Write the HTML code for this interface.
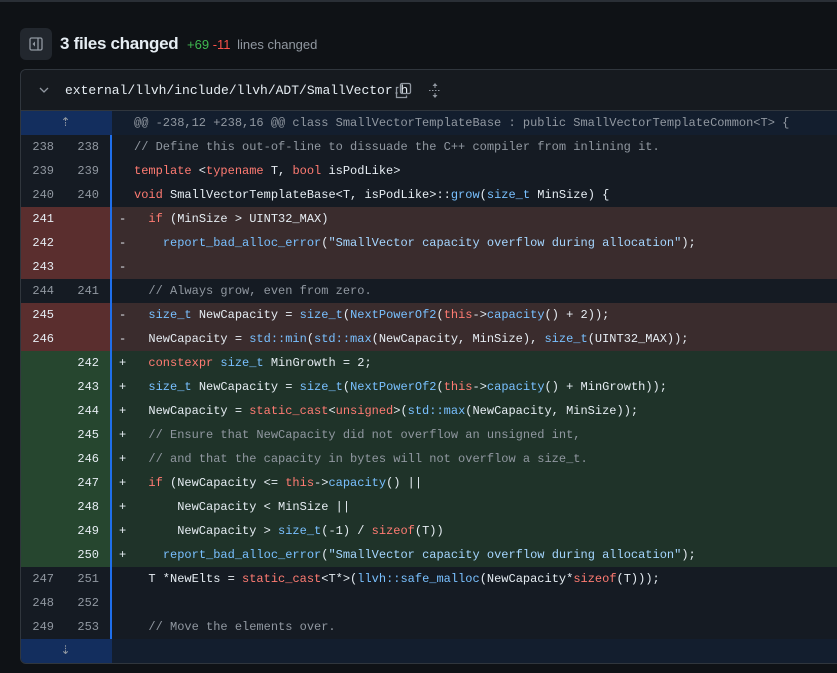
<!DOCTYPE html>
<html><head><style>
body{margin:0;background:#0f1216;width:837px;height:673px;overflow:hidden;font-family:"Liberation Sans",sans-serif;color:#e6edf3;position:relative}
.topline{position:absolute;top:0;left:0;right:0;height:2px;background:#2a2f36}
.tog{position:absolute;left:20px;top:28px;width:32px;height:32px;background:#22272e;border-radius:6px}
.title{position:absolute;left:60px;top:34px;font-size:17px;font-weight:bold;letter-spacing:-0.3px}
.stats{position:absolute;left:187px;top:37px;font-size:13px}
.box{position:absolute;left:20px;top:69px;width:830px;height:593px;border:1px solid #30363d;border-radius:6px;overflow:hidden;background:#151b23}
.hdr{height:40px;background:#161a1f;border-bottom:1px solid #30363d;position:relative}
.path{position:absolute;left:44px;top:13px;font-family:"Liberation Mono",monospace;font-size:13px;color:#e6edf3}
.row{height:24px;display:flex;font-family:"Liberation Mono",monospace;font-size:12px;line-height:24px;white-space:pre}
.n1,.n2{width:44px;text-align:right;padding-right:0;color:#9198a1;box-sizing:border-box}
.n1{width:44px;padding-right:11px;padding-left:0}
.n1{width:44px}
.n2{width:45px;padding-right:11px}
.bar{width:2px;background:#1f6feb}
.m{width:22px;padding-left:7px;box-sizing:border-box}
.c{flex:1}
.d .n1,.d .n2{background:#5a2e2e;color:#e6edf3}
.d .c,.d .m{background:#3a2c2d}
.a .n1,.a .n2{background:#26462f;color:#e6edf3}
.a .c,.a .m{background:#1f3329}
.h .n1,.h .n2{background:#132e5e}
.h .c,.h .m{background:#131e2e;color:#9198a1}
.k{color:#ff7b72}.f{color:#79c0ff}.s{color:#a5d6ff}.cm{color:#9198a1}
</style></head><body>
<div class="topline"></div>
<div class="tog"><svg width="32" height="32" viewBox="0 0 32 32"><rect x="10" y="10" width="12" height="12" rx="1.5" fill="none" stroke="#9198a1" stroke-width="1.3"/><line x1="18" y1="10" x2="18" y2="22" stroke="#9198a1" stroke-width="1.3"/><path d="M15 13.5 L12.5 16 L15 18.5Z" fill="#9198a1"/></svg></div>
<div class="title">3 files changed</div>
<div class="stats"><span style="color:#3fb950">+69</span> <span style="color:#f85149">-11</span> <span style="color:#9198a1;margin-left:3px">lines changed</span></div>
<div class="box">
<div class="hdr">
<svg style="position:absolute;left:17px;top:14px" width="12" height="12" viewBox="0 0 12 12"><path d="M2 4 L6 8 L10 4" fill="none" stroke="#9198a1" stroke-width="1.3"/></svg>
<div class="path">external/llvh/include/llvh/ADT/SmallVector.h</div>
<svg style="position:absolute;left:374px;top:12px" width="17" height="17" viewBox="0 0 17 17"><rect x="5.5" y="1.5" width="10" height="10" rx="1.5" fill="none" stroke="#9198a1" stroke-width="1.3"/><path d="M3.5 5.5 H1.5 V15.5 H11.5 V13.5" fill="none" stroke="#9198a1" stroke-width="1.3"/></svg>
<svg style="position:absolute;left:407px;top:12px" width="14" height="17" viewBox="0 0 14 17"><path d="M7 1 L4.5 4 H9.5Z M7 16 L4.5 13 H9.5Z" fill="#9198a1"/><line x1="7" y1="3" x2="7" y2="6" stroke="#9198a1"/><line x1="7" y1="11" x2="7" y2="14" stroke="#9198a1"/><line x1="1" y1="8.5" x2="13" y2="8.5" stroke="#9198a1" stroke-dasharray="1.5 1.5"/></svg>
</div>
<div class="row h"><span class="n1" style="width:89px;text-align:center;padding:0;color:#9198a1">⇡</span><span class="bar" style="background:#132e5e"></span><span class="m"></span><span class="c">@@ -238,12 +238,16 @@ class SmallVectorTemplateBase : public SmallVectorTemplateCommon&lt;T&gt; {</span></div>
<div class="row"><span class="n1">238</span><span class="n2">238</span><span class="bar"></span><span class="m"></span><span class="c"><span class="cm">// Define this out-of-line to dissuade the C++ compiler from inlining it.</span></span></div>
<div class="row"><span class="n1">239</span><span class="n2">239</span><span class="bar"></span><span class="m"></span><span class="c"><span class="k">template</span> &lt;<span class="k">typename</span> T, <span class="k">bool</span> isPodLike&gt;</span></div>
<div class="row"><span class="n1">240</span><span class="n2">240</span><span class="bar"></span><span class="m"></span><span class="c"><span class="k">void</span> SmallVectorTemplateBase&lt;T, isPodLike&gt;::<span class="f">grow</span>(<span class="f">size_t</span> MinSize) {</span></div>
<div class="row d"><span class="n1">241</span><span class="n2"></span><span class="bar"></span><span class="m">-</span><span class="c">  <span class="k">if</span> (MinSize &gt; UINT32_MAX)</span></div>
<div class="row d"><span class="n1">242</span><span class="n2"></span><span class="bar"></span><span class="m">-</span><span class="c">    <span class="f">report_bad_alloc_error</span>(<span class="s">"SmallVector capacity overflow during allocation"</span>);</span></div>
<div class="row d"><span class="n1">243</span><span class="n2"></span><span class="bar"></span><span class="m">-</span><span class="c"></span></div>
<div class="row"><span class="n1">244</span><span class="n2">241</span><span class="bar"></span><span class="m"></span><span class="c">  <span class="cm">// Always grow, even from zero.</span></span></div>
<div class="row d"><span class="n1">245</span><span class="n2"></span><span class="bar"></span><span class="m">-</span><span class="c">  <span class="f">size_t</span> NewCapacity = <span class="f">size_t</span>(<span class="f">NextPowerOf2</span>(<span class="k">this</span>-&gt;<span class="f">capacity</span>() + 2));</span></div>
<div class="row d"><span class="n1">246</span><span class="n2"></span><span class="bar"></span><span class="m">-</span><span class="c">  NewCapacity = <span class="f">std::min</span>(<span class="f">std::max</span>(NewCapacity, MinSize), <span class="f">size_t</span>(UINT32_MAX));</span></div>
<div class="row a"><span class="n1"></span><span class="n2">242</span><span class="bar"></span><span class="m">+</span><span class="c">  <span class="k">constexpr</span> <span class="f">size_t</span> MinGrowth = 2;</span></div>
<div class="row a"><span class="n1"></span><span class="n2">243</span><span class="bar"></span><span class="m">+</span><span class="c">  <span class="f">size_t</span> NewCapacity = <span class="f">size_t</span>(<span class="f">NextPowerOf2</span>(<span class="k">this</span>-&gt;<span class="f">capacity</span>() + MinGrowth));</span></div>
<div class="row a"><span class="n1"></span><span class="n2">244</span><span class="bar"></span><span class="m">+</span><span class="c">  NewCapacity = <span class="k">static_cast</span>&lt;<span class="k">unsigned</span>&gt;(<span class="f">std::max</span>(NewCapacity, MinSize));</span></div>
<div class="row a"><span class="n1"></span><span class="n2">245</span><span class="bar"></span><span class="m">+</span><span class="c">  <span class="cm">// Ensure that NewCapacity did not overflow an unsigned int,</span></span></div>
<div class="row a"><span class="n1"></span><span class="n2">246</span><span class="bar"></span><span class="m">+</span><span class="c">  <span class="cm">// and that the capacity in bytes will not overflow a size_t.</span></span></div>
<div class="row a"><span class="n1"></span><span class="n2">247</span><span class="bar"></span><span class="m">+</span><span class="c">  <span class="k">if</span> (NewCapacity &lt;= <span class="k">this</span>-&gt;<span class="f">capacity</span>() ||</span></div>
<div class="row a"><span class="n1"></span><span class="n2">248</span><span class="bar"></span><span class="m">+</span><span class="c">      NewCapacity &lt; MinSize ||</span></div>
<div class="row a"><span class="n1"></span><span class="n2">249</span><span class="bar"></span><span class="m">+</span><span class="c">      NewCapacity &gt; <span class="f">size_t</span>(-1) / <span class="k">sizeof</span>(T))</span></div>
<div class="row a"><span class="n1"></span><span class="n2">250</span><span class="bar"></span><span class="m">+</span><span class="c">    <span class="f">report_bad_alloc_error</span>(<span class="s">"SmallVector capacity overflow during allocation"</span>);</span></div>
<div class="row"><span class="n1">247</span><span class="n2">251</span><span class="bar"></span><span class="m"></span><span class="c">  T *NewElts = <span class="k">static_cast</span>&lt;T*&gt;(<span class="f">llvh::safe_malloc</span>(NewCapacity*<span class="k">sizeof</span>(T)));</span></div>
<div class="row"><span class="n1">248</span><span class="n2">252</span><span class="bar"></span><span class="m"></span><span class="c"></span></div>
<div class="row"><span class="n1">249</span><span class="n2">253</span><span class="bar"></span><span class="m"></span><span class="c">  <span class="cm">// Move the elements over.</span></span></div>
<div class="row h"><span class="n1" style="width:89px;text-align:center;padding:0;color:#9198a1">⇣</span><span class="bar" style="background:#132e5e"></span><span class="m"></span><span class="c"></span></div>
</div>
</body></html>
